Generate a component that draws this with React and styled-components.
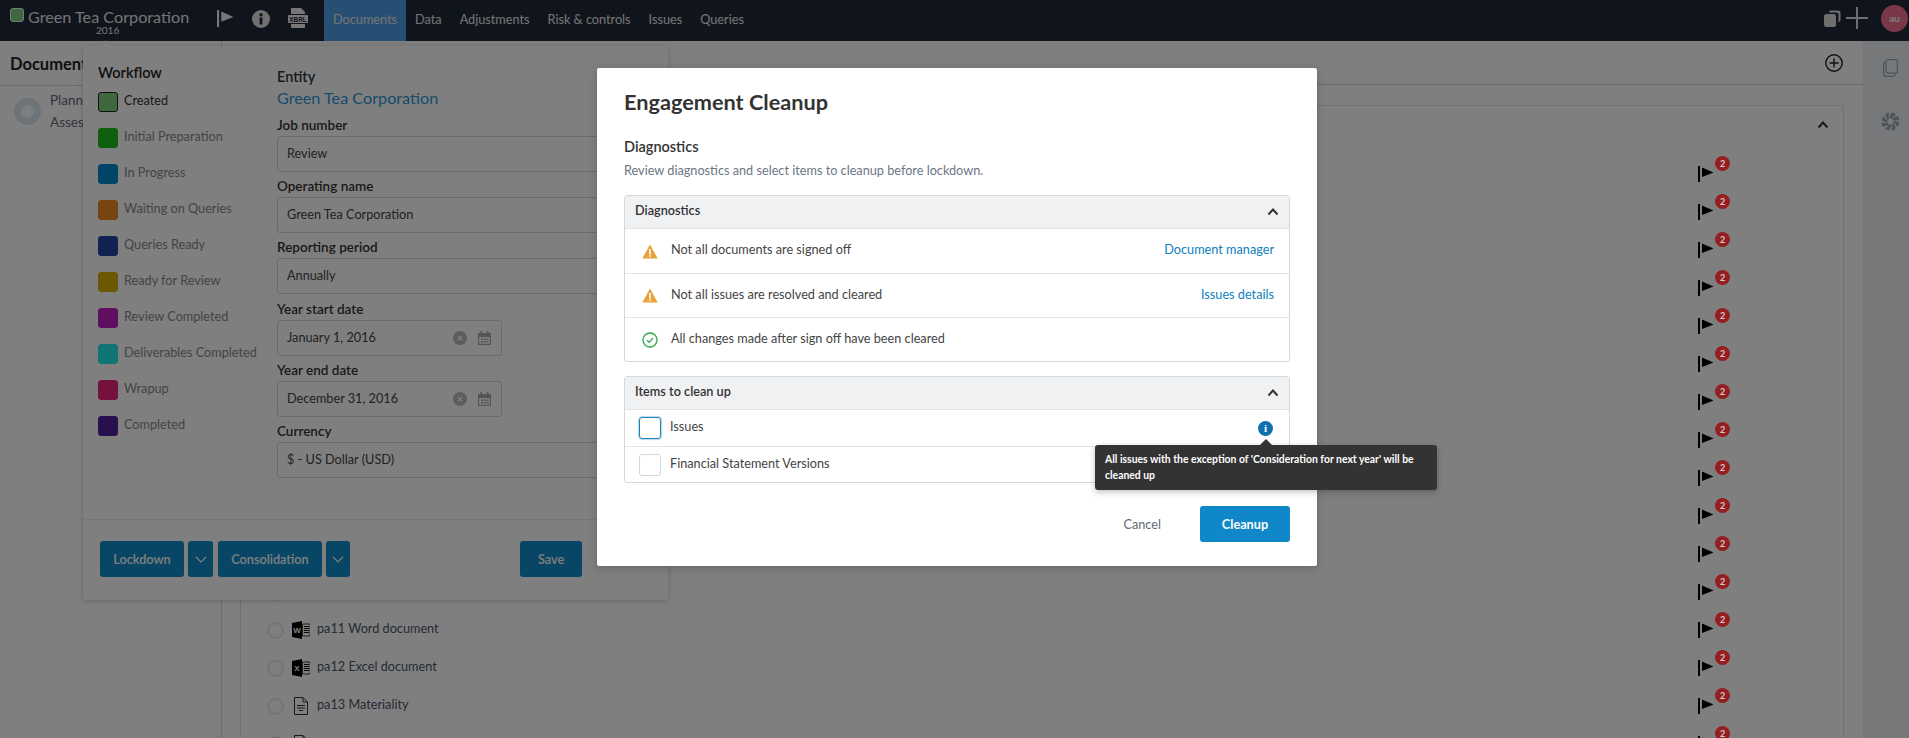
import React from 'react';
import styled, { createGlobalStyle } from 'styled-components';

const Global = createGlobalStyle`
  html, body { margin: 0; padding: 0; height: 100%; overflow: hidden; background: #fff; }
  body { font-family: Lato, "Noto Sans", sans-serif; color: #333; }
  #root { height: 738px; }
  * { box-sizing: border-box; }
`;

const Page = styled.div`position: relative; width: 1909px; height: 738px; overflow: hidden; display: flex; flex-direction: column;`;

const TopBar = styled.header`height: 41px; flex: none; background: #20283a; display: flex; align-items: stretch; color: #fff; position: relative;`;
const Brand = styled.div`width: 217px; padding-left: 10px; flex: none; position: relative;`;
const BrandRow = styled.div`display: flex; align-items: center; gap: 4px; height: 32px; font-size: 16.2px; color: #e8e8e8;`;
const BrandSwatch = styled.span`width: 14px; height: 14px; border-radius: 3px; background: #7fd07f; border: 1px solid #dfe; margin-top: -3px;`;
const BrandYear = styled.div`position: absolute; left: 96px; top: 24px; font-size: 10px; color: #e8e8e8;`;
const BarIcons = styled.div`width: 107px; flex: none; display: flex; align-items: center; color: #f0f0f0; gap: 18px; padding-bottom: 4px;`;
const Tabs = styled.nav`display: flex;`;
const Tab = styled.a`display: flex; align-items: center; padding: 0 9px 3px; font-size: 12.7px; color: #e8e8e8; background: ${p => p.$active ? '#4f9fe8' : 'transparent'};`;
const BarRight = styled.div`margin-left: auto; display: flex; align-items: center; padding: 0 1px 5px 0;`;
const PlusBar = styled.span`margin: 0 13px 0 5px; display: flex;`;
const Avatar = styled.span`width: 27px; height: 27px; border-radius: 50%; background: #f0708f; color: #fff; font-size: 10px; font-weight: 700; display: flex; align-items: center; justify-content: center;`;

const Body = styled.div`flex: 1; display: flex; min-height: 0;`;
const Side = styled.aside`width: 222px; flex: none; border-right: 1px solid #d8d8d8; padding: 13px 10px 0;`;
const SideTitle = styled.h2`margin: 0; font-size: 16.5px; font-weight: 700; line-height: 20px; color: #222;`;
const SideRule = styled.div`height: 1px; background: #d8d8d8; margin: 11px -10px 0;`;
const SideItem = styled.div`display: flex; gap: 9px; padding: 3px 0 0 4px;`;
const Ring = styled.span`width: 27px; height: 27px; border: 7px solid #dae6ee; border-radius: 50%; margin-top: 9px;`;
const SideText = styled.div`font-size: 13.5px; line-height: 22px; color: #667;`;

const Main = styled.main`flex: 1; display: flex; flex-direction: column; min-width: 0;`;
const MainHead = styled.div`height: 44px; flex: none; border-bottom: 1px solid #d8d8d8; display: flex; align-items: center; justify-content: flex-end; padding: 0 20px 0 0;`;
const MainBody = styled.div`flex: 1; padding: 20px 19px 0 18px; min-height: 0;`;
const Card = styled.section`height: 100%; border: 1px solid #e4e4e4; border-bottom: 0; position: relative; padding-top: 49px;`;
const CardChevron = styled.span`position: absolute; right: 14px; top: 13px; display: flex; color: #333;`;
const FileRow = styled.div`height: 38px; display: flex; align-items: center; padding-left: 26px; font-size: 12.7px; color: #4a5568;`;
const Radio = styled.span`width: 17px; height: 17px; border-radius: 50%; border: 2px solid #e8e8e8; margin-right: 8px; flex: none;`;
const FileIconBox = styled.span`width: 18px; height: 18px; display: flex; align-items: center; justify-content: center; margin-right: 7px; flex: none;`;
const FileName = styled.span`flex: 1; padding-bottom: 4px;`;
const FlagCell = styled.span`position: relative; margin-right: 129px; width: 16px; display: flex; color: #000;`;
const Badge = styled.span`position: absolute; z-index: 10; left: 17px; top: -10px; width: 15px; height: 15px; border-radius: 50%; background: #961d20; color: #d0d0d0; font-size: 9px; font-weight: 700; display: flex; align-items: center; justify-content: center;`;

const Rail = styled.aside`width: 46px; flex: none; background: #ecf0f3; display: flex; flex-direction: column; align-items: center; padding: 18px 0 0 8px; gap: 35px; color: #9ea6b0;`;

const Pop = styled.div`position: absolute; left: 83px; top: 46px; width: 585px; height: 554px; background: #fff; box-shadow: 0 1px 6px rgba(0,0,0,.18); display: flex; flex-direction: column;`;
const PopArrow = styled.span`position: absolute; left: 19px; top: -4px; width: 8px; height: 8px; transform: rotate(45deg); background: #fff;`;
const PopBody = styled.div`flex: 1; display: flex; padding: 17px 0 0 15px; min-height: 0;`;
const Flow = styled.div`width: 179px; flex: none;`;
const FlowTitle = styled.h3`margin: 0 0 10px; font-size: 14.5px; line-height: 19px; font-weight: 600; color: #222;`;
const FlowRow = styled.div`height: 36px; display: flex; gap: 6px; font-size: 12.7px; line-height: 16px; color: ${p => p.$on ? '#333' : '#888'};`;
const Swatch = styled.span`width: 20px; height: 20px; flex: none; border-radius: 3px; background: ${p => p.$c}; border: 1px solid ${p => p.$on ? '#222' : p.$c};`;
const Form = styled.div`width: 380px; flex: none; margin-top: 4px;`;
const FormTitle = styled.div`font-size: 14.5px; line-height: 19px; font-weight: 600; color: #333;`;
const EntityName = styled.div`font-size: 16.2px; line-height: 24px; color: #2a98d8; margin-bottom: 4px;`;
const Label = styled.label`display: block; height: 22px; font-size: 13.5px; line-height: 22px; font-weight: 600; color: #333;`;
const Input = styled.div`height: 36px; margin-bottom: 3.2px; width: ${p => p.$w || '100%'}; border: 1px solid #d5d7da; border-radius: 3px; padding: 0 9px 2px; display: flex; align-items: center; font-size: 12.7px; color: #444;`;
const InputIcons = styled.span`margin-left: auto; display: flex; align-items: center; gap: 11px; color: #aaa; padding: 2px 1px 0 0;`;
const Clear = styled.span`width: 14px; height: 14px; border-radius: 50%; background: #bbb; color: #fff; font-size: 11px; line-height: 14px; text-align: center; font-weight: 700;`;
const PopFoot = styled.div`height: 81px; flex: none; border-top: 1px solid #ececec; display: flex; padding: 21px 86px 0 17px; align-items: flex-start;`;
const Btn = styled.button`height: 36px; width: ${p => p.$w}px; border: 0; padding: 0; margin-right: ${p => p.$mr || 0}px; border-radius: 3px; background: #128ccc; color: #fff; font: 600 12.7px Lato, sans-serif; display: flex; align-items: center; justify-content: center;`;
const Push = styled.span`flex: 1;`;

const Overlay = styled.div`position: absolute; inset: 0; background: rgba(0,0,0,.5); padding: 68px 0 0 597px;`;
const Modal = styled.div`position: relative; width: 720px; height: 498px; background: #fff; border-radius: 2px; box-shadow: 0 2px 8px rgba(0,0,0,.2); padding: 20px 27px;`;
const ModalTitle = styled.h1`margin: -1px 0 1px; font-size: 21.7px; line-height: 30px; font-weight: 700; color: #333;`;
const SectionTitle = styled.h2`margin: 20px 0 0; font-size: 14.5px; line-height: 20px; font-weight: 600; color: #333;`;
const Sub = styled.p`margin: 3px 0 15px; font-size: 12.7px; line-height: 20px; color: #6c7685;`;
const Box = styled.div`border: 1px solid #d4d7dc; border-radius: 3px; margin-bottom: 14px;`;
const BoxHead = styled.div`height: 33px; background: #f0f1f3; border-bottom: 1px solid #e2e4e8; padding: 0 10px; display: flex; align-items: center; justify-content: space-between; font-size: 12.7px; font-weight: 600; color: #333;`;
const HeadText = styled.span`padding-bottom: 4px;`;
const DiagRow = styled.div`height: 44px; display: flex; align-items: center; padding: 0 15px 0 17px; font-size: 12.7px; color: #444; gap: 13px; & + & { border-top: 1px solid #e2e4e8; }`;
const RowText = styled.span`padding-bottom: 4px;`;
const RowLink = styled.a`margin-left: auto; color: #1080c0; padding-bottom: 4px;`;
const CheckRow = styled.div`height: 36px; display: flex; align-items: center; padding: 0 16px 0 14px; font-size: 12.7px; color: #444; gap: 9px; & + & { border-top: 1px solid #e2e4e8; }`;
const Check = styled.span`width: 22px; height: 22px; border-radius: 3px; border: 1px solid ${p => p.$focus ? '#1f7fb8' : '#d4d7dc'}; box-shadow: ${p => p.$focus ? '0 0 1px 1px rgba(31,127,184,.3)' : 'none'};`;
const InfoDot = styled.span`margin-left: auto; width: 15px; height: 15px; border-radius: 50%; background: #0f70b0; color: #fff; font: 700 11px/15px "Liberation Serif", serif; text-align: center;`;
const Foot = styled.div`display: flex; justify-content: flex-end; align-items: center; margin-top: 23px;`;
const Cancel = styled.span`font-size: 12.7px; color: #5f6875; margin-right: 39px;`;
const Cleanup = styled.button`width: 90px; height: 36px; border: 0; border-radius: 3px; background: #0f87c9; color: #fff; font: 700 12.7px Lato, sans-serif;`;
const Tip = styled.div`position: absolute; left: 498px; top: 377px; width: 342px; height: 45px; padding: 6px 10px; background: #333; border-radius: 3px; color: #fff; font-size: 10.4px; line-height: 16px; font-weight: 700; box-shadow: 0 2px 6px rgba(0,0,0,.25);`;
const TipArrow = styled.span`position: absolute; left: 165px; top: -6px; border-left: 6px solid transparent; border-right: 6px solid transparent; border-bottom: 6px solid #333;`;

const FlagIcon = ({ size = 16 }) => (
  <svg width={size} height={size} viewBox="0 0 16 16" fill="currentColor"><rect x="0" y="0" width="2" height="16" /><path d="M4 1.5 L15.5 6.5 L4 11 Z" /></svg>
);
const Chevron = ({ up, size = 12 }) => (
  <svg width={size} height={size} viewBox="0 0 12 12" fill="none" stroke="currentColor" strokeWidth={up ? 2 : 1.2}><path d={up ? 'M1.5 8.5 L6 3.5 L10.5 8.5' : 'M1 4 L6 9 L11 4'} /></svg>
);
const Warn = () => (
  <svg width="16" height="15" viewBox="0 0 16 15"><path d="M8 0.5 L15.7 14.5 H0.3 Z" fill="#e8a33a" /><rect x="7.2" y="5" width="1.6" height="5.5" fill="#fff" /><rect x="7.2" y="11.3" width="1.6" height="1.6" fill="#fff" /></svg>
);
const Ok = () => (
  <svg width="16" height="16" viewBox="0 0 16 16" fill="none" stroke="#2eaa4a" strokeWidth="1.3"><circle cx="8" cy="8" r="7" /><path d="M5 8.2 L7.2 10.3 L11 5.8" /></svg>
);
const Calendar = () => (
  <svg width="13" height="14" viewBox="0 0 13 14" fill="currentColor"><rect x="2.5" y="0" width="1.5" height="3" /><rect x="9" y="0" width="1.5" height="3" /><path fillRule="evenodd" d="M0 2 H13 V14 H0 Z M1.2 6 V12.8 H11.8 V6 Z" /><path d="M3 7.5h2v1.5H3zM5.8 7.5h2v1.5h-2zM8.5 7.5h2v1.5h-2zM3 10h2v1.5H3zM5.8 10h2v1.5h-2zM8.5 10h2v1.5h-2z" /></svg>
);
const Xbrl = () => (
  <svg width="20" height="21" viewBox="0 0 20 21" fill="#eee"><path d="M3 0 H13 L17 4 V6 H3 Z" /><rect x="0" y="7" width="20" height="8" rx="1" /><path d="M3 16 H17 V19 Q17 20 16 20 H4 Q3 20 3 19 Z" /><text x="10" y="13.6" textAnchor="middle" fontSize="6.4" fontWeight="700" fill="#20283a" fontFamily="Liberation Sans">XBRL</text></svg>
);
const OfficeIcon = ({ letter }) => (
  <svg width="18" height="18" viewBox="0 0 18 18"><path d="M0 2 L10 0 V18 L0 16 Z" fill="#000" /><text x="5" y="12" textAnchor="middle" fontSize="8" fontWeight="700" fill="#fff" fontFamily="Liberation Sans">{letter}</text><path d="M10.5 3 H18 V15 H10.5 Z" fill="#fff" stroke="#111" strokeWidth=".8" /><path d="M12 5.5H17M12 7.5H17M12 9.5H17M12 11.5H17" stroke="#111" strokeWidth="1" /></svg>
);
const DocIcon = () => (
  <svg width="14" height="18" viewBox="0 0 14 18" fill="none" stroke="#333" strokeWidth="1"><path d="M.5.5H9L13.5 5V17.5H.5Z" /><path d="M9 .5V5H13.5M3 8.5H11M3 11H11M5 13.5H9" /></svg>
);
const Stack = () => (
  <svg width="17" height="17" viewBox="0 0 17 17" fill="#ddd"><rect x="0" y="4" width="12" height="13" rx="2.5" /><path d="M5 2.5 Q5 0.5 7 0.5 H14 Q16.5 .5 16.5 3 V10 Q16.5 12 14.5 12 V4.5 Q14.5 2.5 12.5 2.5 Z" /></svg>
);
const CopyIcon = () => (
  <svg width="15" height="18" viewBox="0 0 15 18" fill="none" stroke="currentColor" strokeWidth="1.2"><rect x="3" y=".6" width="11.4" height="13.5" rx="2" /><path d="M3 3 H2.5 Q.6 3 .6 5 V15 Q.6 17.4 3 17.4 H10 Q12 17.4 12 14.5" /></svg>
);
const Swirl = () => (
  <svg width="19" height="19" viewBox="-10 -10 20 20" fill="currentColor">
    {[0, 45, 90, 135, 180, 225, 270, 315].map(a => (
      <path key={a} transform={`rotate(${a})`} d="M-1.3 -3.2 Q-0.5 -7 1.65 -9.36 A9.5 9.5 0 0 1 5.85 -7.49 Q2.2 -6 1.3 -3.2 Z" />
    ))}
  </svg>
);

const steps = [
  ['Created', '#7fd07f'], ['Initial Preparation', '#1fbf1f'], ['In Progress', '#0088cc'], ['Waiting on Queries', '#f08a24'],
  ['Queries Ready', '#20449e'], ['Ready for Review', '#d6b000'], ['Review Completed', '#be1ec0'], ['Deliverables Completed', '#24eaea'],
  ['Wrapup', '#e8227e'], ['Completed', '#50209e'],
];
const fields = [['Job number', 'Review'], ['Operating name', 'Green Tea Corporation'], ['Reporting period', 'Annually']];
const dates = [['Year start date', 'January 1, 2016'], ['Year end date', 'December 31, 2016']];
const files = [
  ...Array.from({ length: 12 }, (_, i) => ({ id: i, name: '', icon: null })),
  { id: 12, name: 'pa11 Word document', icon: <OfficeIcon letter="W" /> },
  { id: 13, name: 'pa12 Excel document', icon: <OfficeIcon letter="X" /> },
  { id: 14, name: 'pa13 Materiality', icon: <DocIcon /> },
  { id: 15, name: '', icon: <DocIcon /> },
];

export default function App() {
  return (
    <Page>
      <Global />
      <TopBar>
        <Brand>
          <BrandRow><BrandSwatch />Green Tea Corporation</BrandRow>
          <BrandYear>2016</BrandYear>
        </Brand>
        <BarIcons>
          <FlagIcon size={17} />
          <svg width="18" height="18" viewBox="0 0 18 18"><circle cx="9" cy="9" r="9" fill="#e0e0e0" /><rect x="7.6" y="7.5" width="2.8" height="7" fill="#20283a" /><circle cx="9" cy="4.8" r="1.7" fill="#20283a" /></svg>
          <Xbrl />
        </BarIcons>
        <Tabs>
          <Tab $active>Documents</Tab>
          <Tab>Data</Tab><Tab>Adjustments</Tab><Tab>Risk &amp; controls</Tab><Tab>Issues</Tab><Tab>Queries</Tab>
        </Tabs>
        <BarRight>
          <Stack />
          <PlusBar><svg width="22" height="22" viewBox="0 0 22 22" stroke="#ddd" strokeWidth="2"><path d="M11 0V22M0 11H22" /></svg></PlusBar>
          <Avatar>au</Avatar>
        </BarRight>
      </TopBar>
      <Body>
        <Side>
          <SideTitle>Documents</SideTitle>
          <SideRule />
          <SideItem>
            <Ring />
            <SideText>Planning<br />Assessment</SideText>
          </SideItem>
        </Side>
        <Main>
          <MainHead>
            <svg width="18" height="18" viewBox="0 0 18 18" fill="none" stroke="#222" strokeWidth="1.4"><circle cx="9" cy="9" r="8.2" /><path d="M9 4.5V13.5M4.5 9H13.5" /></svg>
          </MainHead>
          <MainBody>
            <Card>
              <CardChevron><Chevron up /></CardChevron>
              {files.map(f => (
                <FileRow key={f.id}>
                  <Radio /><FileIconBox>{f.icon}</FileIconBox><FileName>{f.name}</FileName>
                  <FlagCell><FlagIcon /><Badge>2</Badge></FlagCell>
                </FileRow>
              ))}
            </Card>
          </MainBody>
        </Main>
        <Rail><CopyIcon /><Swirl /></Rail>
      </Body>
      <Pop>
        <PopArrow />
        <PopBody>
          <Flow>
            <FlowTitle>Workflow</FlowTitle>
            {steps.map(([n, c], i) => (
              <FlowRow key={n} $on={i === 0}><Swatch $c={c} $on={i === 0} />{n}</FlowRow>
            ))}
          </Flow>
          <Form>
            <FormTitle>Entity</FormTitle>
            <EntityName>Green Tea Corporation</EntityName>
            {fields.map(([l, v]) => (<div key={l}><Label>{l}</Label><Input>{v}</Input></div>))}
            {dates.map(([l, v]) => (
              <div key={l}><Label>{l}</Label><Input $w="225px">{v}<InputIcons><Clear>×</Clear><Calendar /></InputIcons></Input></div>
            ))}
            <Label>Currency</Label><Input>$ - US Dollar (USD)</Input>
          </Form>
        </PopBody>
        <PopFoot>
          <Btn $w={84} $mr={4}>Lockdown</Btn>
          <Btn $w={25} $mr={5}><Chevron /></Btn>
          <Btn $w={104} $mr={4}>Consolidation</Btn>
          <Btn $w={24}><Chevron /></Btn>
          <Push />
          <Btn $w={62}>Save</Btn>
        </PopFoot>
      </Pop>
      <Overlay>
        <Modal>
          <ModalTitle>Engagement Cleanup</ModalTitle>
          <SectionTitle>Diagnostics</SectionTitle>
          <Sub>Review diagnostics and select items to cleanup before lockdown.</Sub>
          <Box>
            <BoxHead><HeadText>Diagnostics</HeadText><Chevron up /></BoxHead>
            <DiagRow><Warn /><RowText>Not all documents are signed off</RowText><RowLink>Document manager</RowLink></DiagRow>
            <DiagRow><Warn /><RowText>Not all issues are resolved and cleared</RowText><RowLink>Issues details</RowLink></DiagRow>
            <DiagRow><Ok /><RowText>All changes made after sign off have been cleared</RowText></DiagRow>
          </Box>
          <Box>
            <BoxHead><HeadText>Items to clean up</HeadText><Chevron up /></BoxHead>
            <CheckRow><Check $focus /><RowText>Issues</RowText><InfoDot>i</InfoDot></CheckRow>
            <CheckRow><Check /><RowText>Financial Statement Versions</RowText></CheckRow>
          </Box>
          <Foot><Cancel>Cancel</Cancel><Cleanup>Cleanup</Cleanup></Foot>
          <Tip><TipArrow />All issues with the exception of 'Consideration for next year' will be cleaned up</Tip>
        </Modal>
      </Overlay>
    </Page>
  );
}
